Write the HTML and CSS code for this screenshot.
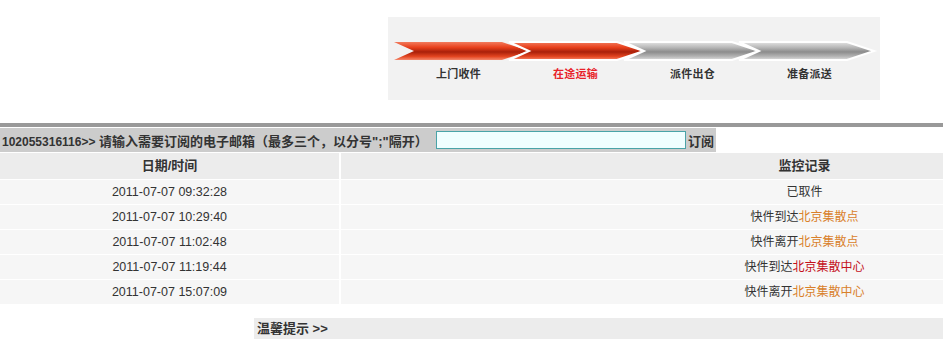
FILE: index.html
```html
<!DOCTYPE html>
<html lang="zh-CN">
<head>
  <meta charset="UTF-8" />
  <title>快件跟踪</title>
  <link rel="stylesheet" href="styles.css">
</head>
<body>
  <div class="page">

    <!-- 运输进度 -->
    <div class="progress">
      <svg class="arrows" width="492" height="20" viewBox="0 0 492 20">
        <defs>
          <linearGradient id="red" x1="0" y1="0" x2="0" y2="1">
            <stop offset="0" stop-color="#f27a5c"/>
            <stop offset="0.3" stop-color="#e8401c"/>
            <stop offset="0.55" stop-color="#a9200a"/>
            <stop offset="0.8" stop-color="#e2441f"/>
            <stop offset="1" stop-color="#f5886c"/>
          </linearGradient>
          <linearGradient id="grey" x1="0" y1="0" x2="0" y2="1">
            <stop offset="0" stop-color="#e4e4e4"/>
            <stop offset="0.3" stop-color="#b8b8b8"/>
            <stop offset="0.55" stop-color="#8c8c8c"/>
            <stop offset="0.8" stop-color="#b4b4b4"/>
            <stop offset="1" stop-color="#e0e0e0"/>
          </linearGradient>
          <polygon id="chev" points="0,1 108,1 135,10 108,19 0,19 20,10"/>
        </defs>
        <use href="#chev" x="6" fill="url(#red)"/>
        <use href="#chev" x="121" fill="url(#red)" stroke="#fff" stroke-width="2"/>
        <use href="#chev" x="236" fill="url(#grey)" stroke="#fff" stroke-width="2"/>
        <use href="#chev" x="351" fill="url(#grey)" stroke="#fff" stroke-width="2"/>
      </svg>
      <div class="steps">
        <span>上门收件</span>
        <span class="current">在途运输</span>
        <span>派件出仓</span>
        <span>准备派送</span>
      </div>
    </div>

    <div class="rule"></div>

    <!-- 邮件订阅 -->
    <div class="subscribe">
      <span class="label"><b class="num">102055316116&gt;&gt;</b> 请输入需要订阅的电子邮箱（最多三个，以分号";"隔开）</span>
      <input type="text" class="email">
      <span class="go">订阅</span>
    </div>

    <!-- 跟踪记录 -->
    <div class="records">
      <div class="row head">
        <div class="time">日期/时间</div>
        <div class="info">监控记录</div>
      </div>
      <div class="row">
        <div class="time">2011-07-07 09:32:28</div>
        <div class="info">已取件</div>
      </div>
      <div class="row">
        <div class="time">2011-07-07 10:29:40</div>
        <div class="info">快件到达<span class="place">北京集散点</span></div>
      </div>
      <div class="row">
        <div class="time">2011-07-07 11:02:48</div>
        <div class="info">快件离开<span class="place">北京集散点</span></div>
      </div>
      <div class="row">
        <div class="time">2011-07-07 11:19:44</div>
        <div class="info">快件到达<span class="place red">北京集散中心</span></div>
      </div>
      <div class="row">
        <div class="time">2011-07-07 15:07:09</div>
        <div class="info">快件离开<span class="place">北京集散中心</span></div>
      </div>
    </div>

    <div class="tips">温馨提示 &gt;&gt;</div>
  </div>
</body>
</html>
```

FILE: styles.css
```css
body {
  margin: 0;
  font-family: "Liberation Sans", "Noto Sans CJK SC", sans-serif;
  font-size: 12px;
  color: #333;
  overflow: hidden;
}

.page {
  width: 1268px;
  padding-top: 17px;
}

/* progress box */
.progress {
  width: 492px;
  height: 83px;
  margin: 0 auto;
  background: #f2f2f2;
  box-sizing: border-box;
  padding-top: 24px;
}

.arrows {
  display: block;
}

.steps {
  display: flex;
  padding-left: 12px;
  margin-top: 4px;
}

.steps span {
  width: 117px;
  text-align: center;
  font-size: 11px;
  font-weight: bold;
  letter-spacing: 0.3px;
  color: #333;
}

.steps .current {
  color: #e8222a;
}

.rule {
  height: 4px;
  background: #999;
  margin-top: 23px;
}

/* subscribe bar */
.subscribe {
  width: 716px;
  height: 24px;
  margin-top: 1px;
  background: #ccc;
  display: flex;
  align-items: center;
  font-weight: bold;
  font-size: 13px;
  color: #333;
}

.subscribe .label {
  padding-left: 2px;
  width: 432px;
  white-space: nowrap;
}

.subscribe .num {
  font-size: 12px;
}

.subscribe .email {
  width: 250px;
  height: 18px;
  box-sizing: border-box;
  margin: 0 2px;
  padding: 0;
  border: 1px solid #4aa3a8;
  background: #f0feff;
}

/* record table */
.records {
  margin-top: 1px;
}

.row {
  display: flex;
  height: 24px;
  line-height: 24px;
  border-bottom: 1px solid #fff;
  background: #f6f6f6;
  text-align: center;
}

.row .time {
  width: 339px;
  border-right: 2px solid #fff;
  font-size: 12.5px;
}

.row .info {
  flex: 1;
}

.row.head {
  height: 26px;
  line-height: 26px;
  background: #ececec;
  font-weight: bold;
}

.row.head .time,
.row.head .info {
  font-size: 13px;
}

.place {
  color: #d9802a;
}

.place.red {
  color: #c4101a;
}

.tips {
  width: 760px;
  height: 21px;
  line-height: 22px;
  margin: 13px auto 0;
  background: #ececec;
  font-weight: bold;
  font-size: 13px;
  padding-left: 3px;
  box-sizing: border-box;
}
```
